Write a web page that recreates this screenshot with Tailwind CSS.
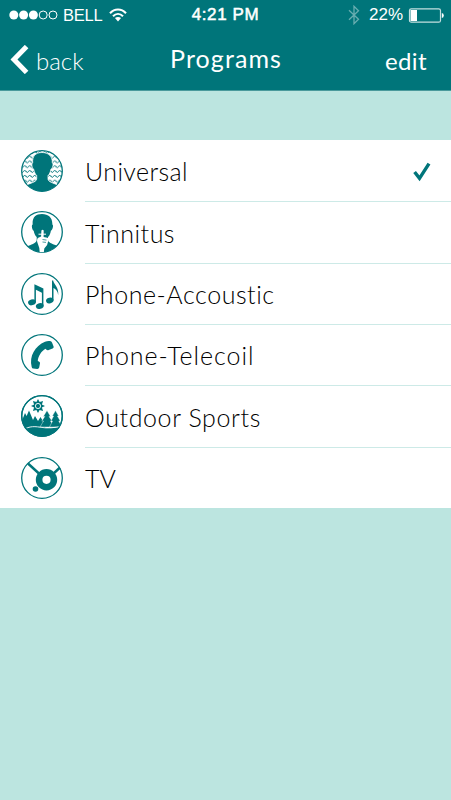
<!DOCTYPE html>
<html lang="en">
<head>
    <meta charset="UTF-8">
    <title>Programs</title>
    <script src="https://cdn.jsdelivr.net/npm/@tailwindcss/browser@4"></script>
</head>
<body class="bg-[#bce5e0] h-screen overflow-hidden font-['Lato',sans-serif]">
    <header class="h-[91px] bg-[#00757a] border-b border-[#4a9a9c] text-white">
        <!-- status bar -->
        <div class="h-[30px] grid grid-cols-3 items-center pl-[9px] pr-[7px] font-['Liberation_Sans',sans-serif]">
            <div class="flex items-center">
                <svg class="w-[49px] h-[10px]" viewBox="0 0 49 10">
                    <g fill="#fff"><circle cx="4.8" cy="5" r="4.5"/><circle cx="14.6" cy="5" r="4.5"/><circle cx="24.4" cy="5" r="4.5"/></g>
                    <g fill="none" stroke="#fff" stroke-width="1"><circle cx="34.2" cy="5" r="4"/><circle cx="44" cy="5" r="4"/></g>
                </svg>
                <span class="ml-[5px] text-[16.5px] tracking-[-0.2px]">BELL</span>
                <svg class="ml-[6px] w-[18px] h-[14px]" viewBox="0 0 18 14">
                    <g fill="none" stroke="#fff" stroke-width="2.1"><path d="M1 5.2C5.6.3 12.4.3 17 5.2"/><path d="M4 8.2C7 5.2 11 5.2 14 8.2"/></g>
                    <path fill="#fff" d="M5.9 10.1q3.1-2.4 6.2 0L9 13.4z"/>
                </svg>
            </div>
            <div class="text-center text-[17px] pr-[2px] tracking-[0.6px] whitespace-nowrap [-webkit-text-stroke:0.5px_white]">4:21 PM</div>
            <div class="flex items-center justify-end">
                <svg class="w-[12px] h-[20px]" viewBox="0 0 12 20" fill="none" stroke="#68adb0" stroke-width="1.3"><path d="M1 5.2l9.5 9L6 18.7V1.3l4.5 4.4L1 14.8"/></svg>
                <span class="ml-[9px] text-[17px]">22%</span>
                <svg class="ml-[5px] w-[36px] h-[15px]" viewBox="0 0 36 15">
                    <rect x="1.5" y=".8" width="31" height="13.4" rx="1.8" fill="none" stroke="#c4dfe0" stroke-width="1.2"/>
                    <rect x="2.5" y="2" width="6.5" height="11" fill="#fff"/>
                    <path fill="#fff" d="M33.8 5q2 .4 2 2.5t-2 2.5z"/>
                </svg>
            </div>
        </div>
        <!-- navigation -->
        <nav class="h-[60px] grid grid-cols-3 pl-[10px] pr-[24px]">
            <div class="flex items-start pt-[15px]">
                <svg class="w-[19px] h-[29px]" viewBox="0 0 19 29"><path d="M16.6 1.6L4 14.5l12.600 12.900" fill="none" stroke="#fff" stroke-width="5"/></svg>
                <span class="ml-[7px] text-[24px] leading-[32px] font-light">back</span>
            </div>
            <div class="text-center pt-[12px] pl-[15px] text-[25px] leading-[32px] tracking-[1.1px] whitespace-nowrap">Programs</div>
            <div class="text-right pt-[15px] text-[24px] leading-[32px] tracking-[0.4px]">edit</div>
        </nav>
    </header>

    <main class="mt-[49px] h-[368px] bg-white grid grid-rows-6 text-[25px] font-light text-black">
        <div class="flex pl-[21px]">
            <svg class="mt-[10px] w-[42px] h-[42px] shrink-0" viewBox="0 0 42 42">
                <defs>
                    <clipPath id="disc"><circle cx="21" cy="21" r="20.3"/></clipPath>
                    <pattern id="waves" width="5" height="4.8" patternUnits="userSpaceOnUse"><path d="M-.6 1.2L1.25 3.5 3.75 1 5.6 3.2" fill="none" stroke="#00757a" stroke-width=".9"/></pattern>
                </defs>
                <circle cx="21" cy="21" r="20.3" fill="url(#waves)" stroke="#00757a" stroke-width="1.3"/>
                <g clip-path="url(#disc)"><path fill="#00757a" stroke="#fff" stroke-width=".8" d="M21 2.5C14.3 2.5 11 6.5 11.7 13c-1.5.2-.8 5.5 1 6.2.5 3 1.6 5 3 6.4v3.1c0 3-5 4-8.2 5.5C4.5 35.8 4 38 3 44h37c-.5-6-1.5-8-5-9.7-4-1.8-8-2.600-8-5.600v-3.100c1.500-1.400 2.400-3.400 2.900-6.400 1.900-.7 2.900-6 1.400-6.200.4-6.500-3.600-10.500-10.300-10.500z"/></g>
            </svg>
            <div class="ml-[22px] -mb-px flex-1 border-b border-[#cdeae7] flex items-center justify-between pt-[3px] pr-[20px]">
                <span class="tracking-[0.4px]">Universal</span>
                <svg class="w-[18px] h-[20px]" viewBox="0 0 18 20"><path d="M1.6 10l4.9 6.4L16 1.6" fill="none" stroke="#00757a" stroke-width="3.4"/></svg>
            </div>
        </div>
        <div class="flex pl-[21px]">
            <svg class="mt-[10px] w-[42px] h-[42px] shrink-0" viewBox="0 0 42 42">
                <circle cx="21" cy="21" r="20.3" fill="#fff" stroke="#00757a" stroke-width="1.3"/>
                <g clip-path="url(#disc)">
                    <path fill="#00757a" d="M21 3C14.3 3 11 7 11.7 13.5c-1.5.2-.8 5.5 1 6.2.5 3 1.6 5 3 6.4v2.6c0 3-4 4.5-8.2 6C3.5 36 4 38 3 44h37c-.5-6-1.5-8-5-9.7-4-1.8-8-2.600-8-5.600v-2.600c1.500-1.400 2.400-3.400 2.900-6.400 1.900-.7 2.900-6 1.400-6.200C31.700 7 27.700 3 21 3z"/>
                    <path fill="#fff" d="M20.4 19.500q1.300-1.500 2.300 0l-.1 6.500 3.700.7q1.700.5 1.100 2.800l-1.300 4.500-2.800 3.500-.6 5h-3.900l-.5-5.500-1.900-5.500q-.9-2.500.4-4.500l3.300-1.500z"/>
                    <path d="M17.5 23.200h7.500" stroke="#fff" stroke-width="1"/>
                    <path d="M21.5 28.500l4 .6M21.500 31l3.500.4" stroke="#00757a" stroke-width=".7"/>
                </g>
            </svg>
            <div class="ml-[22px] -mb-px flex-1 border-b border-[#cdeae7] flex items-center pt-[3px] tracking-[0.5px]">Tinnitus</div>
        </div>
        <div class="flex pl-[21px]">
            <svg class="mt-[10px] w-[42px] h-[42px] shrink-0" viewBox="0 0 42 42" fill="#00757a">
                <circle cx="21" cy="21" r="20.3" fill="#fff" stroke="#00757a" stroke-width="1.3"/>
                <path d="M13.4 11.3l9 4.2v17.300h-1.500V19.700l-6-2.900v12.400h-1.500z"/>
                <ellipse cx="11" cy="29.3" rx="4" ry="2.9" transform="rotate(-15 11 29.3)"/>
                <ellipse cx="18.8" cy="33" rx="4" ry="2.9" transform="rotate(-15 18.8 33)"/>
                <ellipse cx="28.8" cy="27.5" rx="3.8" ry="2.8" transform="rotate(-15 28.8 27.5)"/>
                <path d="M31 7.500h1.200c.5 4 5.800 6.500 5 14.500-.6-4-2.300-6-4.700-7v12.500H31z"/>
            </svg>
            <div class="ml-[22px] -mb-px flex-1 border-b border-[#cdeae7] flex items-center pt-[2px] tracking-[0.55px]">Phone-Accoustic</div>
        </div>
        <div class="flex pl-[21px]">
            <svg class="mt-[10px] w-[42px] h-[42px] shrink-0" viewBox="0 0 42 42">
                <circle cx="21" cy="21" r="20.3" fill="#fff" stroke="#00757a" stroke-width="1.3"/>
                <path fill="#00757a" d="M24 7.7c1.8-.8 3.500-.9 5-.7q1.500.2 2 1.500l1.600 3.900q.4 1.600-1 2.200l-3.900 1.500q-1.500.5-2.500-.5l-.7-.9c-4 2.200-7.500 7.500-7.700 12.400l1.100.3q1.300.5 1.100 1.900l-.8 4.200q-.4 1.500-2 1.400l-3.900-.3q-1.300-.2-1.600-1.700C8 22 14 12 24 7.700z"/>
            </svg>
            <div class="ml-[22px] -mb-px flex-1 border-b border-[#cdeae7] flex items-center pt-[2px] tracking-[0.95px]">Phone-Telecoil</div>
        </div>
        <div class="flex pl-[21px]">
            <svg class="mt-[10px] w-[42px] h-[42px] shrink-0" viewBox="0 0 42 42">
                <circle cx="21" cy="21" r="20.3" fill="#fff" stroke="#00757a" stroke-width="1.3"/>
                <g clip-path="url(#disc)" fill="#00757a">
                    <path d="M17 4.100l1.600 3 3.500-1.200-1.200 3.500 3.100 1.600-3.100 1.600 1.200 3.500-3.500-1.200L17 17.900l-1.600-3-3.500 1.200 1.200-3.500-3.100-1.600 3.100-1.600-1.200-3.500 3.500 1.200z"/>
                    <circle cx="17" cy="11" r="2.600" fill="none" stroke="#fff" stroke-width=".9"/>
                    <path d="M0 28l4-10 1.600 3L8 15.500l4 9.500 2-4 3 5 2.500-4 3.500 6 2 8H0z"/>
                    <path d="M26 15.500l3.500 6h-1.500l3 4.500h-1.500l3.500 6H19l3.500-6h-1.700l3-4.500h-1.500z" stroke="#fff" stroke-width=".4"/>
                    <path d="M34.500 15.500l3.200 5.500h-1.300l2.900 5h-1.500l3.200 6H28.500l3-6h-1.500l2.600-5h-1.300z" stroke="#fff" stroke-width=".4"/>
                    <path d="M0 36.500c6-5 12-5.500 19-4.300 8 1.400 14 .5 23-1V42H0z" stroke="#fff" stroke-width=".9"/>
                </g>
                <circle cx="21" cy="21" r="20.3" fill="none" stroke="#00757a" stroke-width="1.3"/>
            </svg>
            <div class="ml-[22px] -mb-px flex-1 border-b border-[#cdeae7] flex items-center pt-[3px] tracking-[0.6px]">Outdoor Sports</div>
        </div>
        <div class="flex pl-[21px]">
            <svg class="mt-[10px] w-[42px] h-[42px] shrink-0" viewBox="0 0 42 42">
                <circle cx="21" cy="21" r="20.3" fill="#fff" stroke="#00757a" stroke-width="1.3"/>
                <path d="M7 6.500L18.500 17M39 10.500L32 17" stroke="#00757a" stroke-width="2.400"/>
                <circle cx="25.500" cy="22.800" r="7.400" fill="none" stroke="#00757a" stroke-width="6.600"/>
                <circle cx="14.500" cy="32" r="2.800" fill="#00757a"/>
            </svg>
            <div class="ml-[22px] flex-1 flex items-center pt-[3px]">TV</div>
        </div>
    </main>
</body>
</html>
